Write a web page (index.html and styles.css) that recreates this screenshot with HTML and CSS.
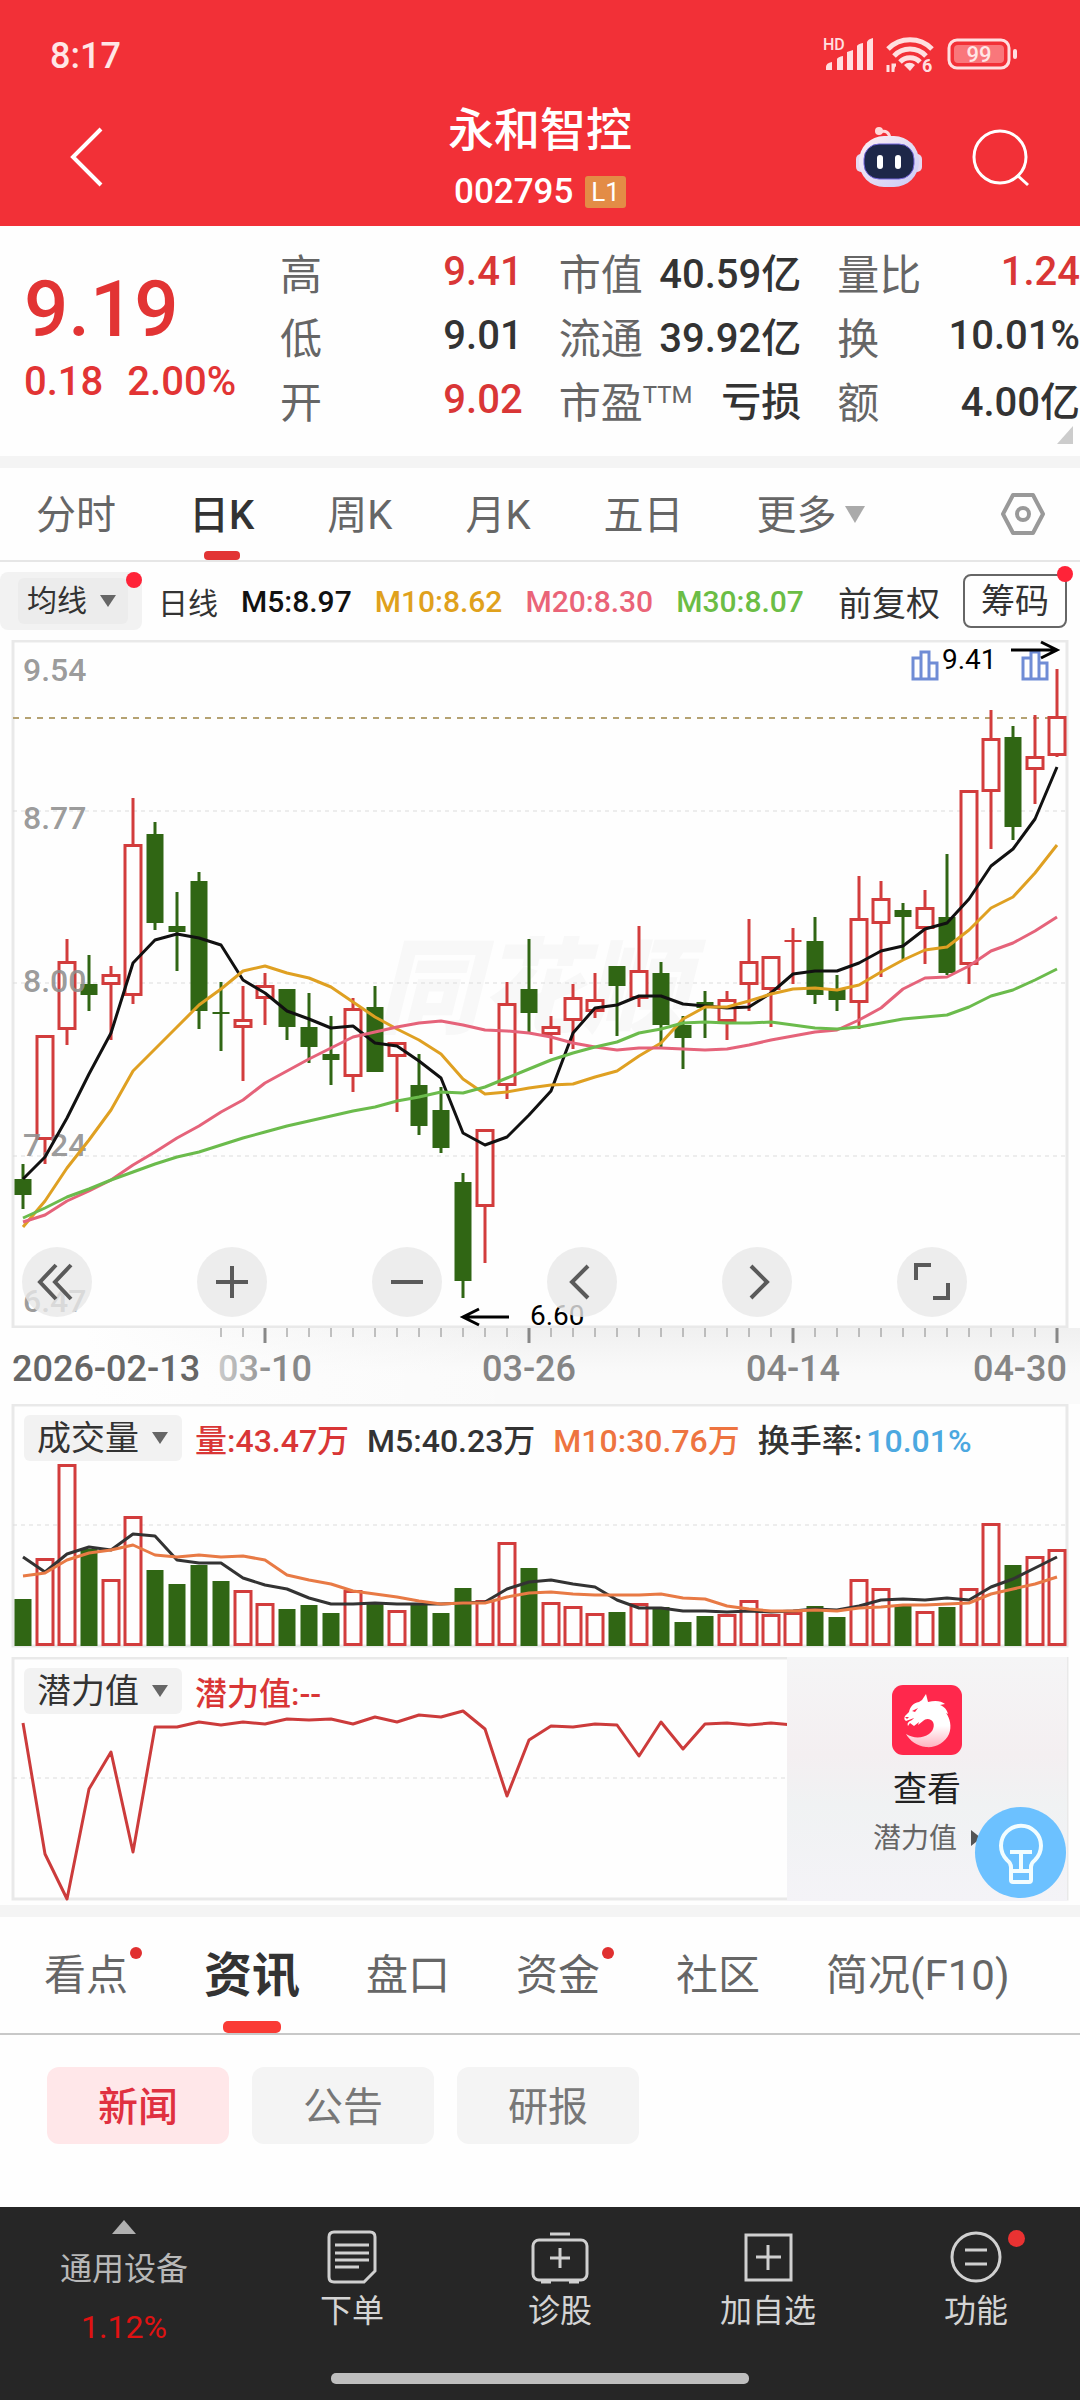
FILE: index.html
```html
<!DOCTYPE html>
<html lang="zh-CN">
<head>
    <meta charset="utf-8" />
    <meta name="viewport" content="width=device-width, initial-scale=1" />
    <title>永和智控 002795</title>
    <link rel="stylesheet" href="styles.css">
</head>
<body>
    <header class="header">
        <div class="status-bar">
            <span class="time">8:17</span>
            <svg class="status-icons" width="196" height="40" viewBox="0 0 196 40">
                <g fill="#ffdfe0">
                    <text class="svg-text" x="0" y="14" font-size="16" font-weight="500">HD</text>
                    <path d="M3 34v-3q0-4 6-5v8zM14 34V23q1-2 6-3v14zM24 34V16l6-2v20zM34 34V10q1-2 6-3v27zM44 34V6q1-3 6-4v32z" />
                    <path d="M81 29a8 8 0 0 1 11 0l-5 6z" />
                    <path d="M65 29v7M70 36v-7h3" stroke="#ffdfe0" stroke-width="3" />
                    <text class="svg-text" x="99" y="36" font-size="18" font-weight="700">6</text>
                </g>
                <g fill="none" stroke="#ffdfe0" stroke-width="5">
                    <path d="M65 13a31 31 0 0 1 44 0M71 20a22 22 0 0 1 32 0M77 26a14 14 0 0 1 20 0" />
                </g>
                <rect x="126" y="4" width="60" height="28" rx="8" fill="none" stroke="#ffdfe0" stroke-width="3" />
                <rect x="131" y="9" width="50" height="18" rx="4" fill="#f9777b" />
                <text class="svg-text" x="156" y="26" font-size="22" font-weight="500" text-anchor="middle" fill="#ffe6e6">99</text>
                <rect x="190" y="13" width="4" height="10" rx="2" fill="#ffdfe0" />
            </svg>
        </div>
        <div class="title-bar">
            <button class="icon-btn" aria-label="返回">
                <svg width="40" height="64" viewBox="0 0 40 64"><path d="M35 4L7 32l28 28" fill="none" stroke="#fff" stroke-width="4" /></svg>
            </button>
            <div class="title">
                <h1>永和智控</h1>
                <div class="code">002795 <span class="level">L1</span></div>
            </div>
            <div class="title-actions">
                <button class="icon-btn" aria-label="智能助手">
                    <svg width="68" height="64" viewBox="0 0 68 64">
                        <defs>
                            <linearGradient id="shell" x1="0" y1="0" x2="1" y2="1">
                                <stop offset="0" stop-color="#fff0f2" />
                                <stop offset="1" stop-color="#c9cbf6" />
                            </linearGradient>
                        </defs>
                        <path d="M25 7q9-3 10 7" fill="none" stroke="#ffd9da" stroke-width="3" />
                        <circle cx="24" cy="6" r="4" fill="#ffd9da" />
                        <rect x="1" y="29" width="10" height="18" rx="5" fill="#e6d8f0" />
                        <rect x="57" y="29" width="10" height="18" rx="5" fill="#e6d8f0" />
                        <rect x="4" y="11" width="60" height="51" rx="25" fill="url(#shell)" />
                        <rect x="9" y="19" width="50" height="35" rx="15" fill="#1d2748" stroke="#7566dc" stroke-width="1" />
                        <rect x="22" y="30" width="6" height="14" rx="3" fill="#fff" />
                        <rect x="40" y="30" width="6" height="14" rx="3" fill="#fff" />
                    </svg>
                </button>
                <button class="icon-btn" aria-label="搜索">
                    <svg width="60" height="60" viewBox="0 0 60 60"><g fill="none" stroke="#fff" stroke-width="3"><circle cx="30" cy="30" r="26" /><path d="M47 48l11 10" /></g></svg>
                </button>
            </div>
        </div>
    </header>

    <main>
        <section class="quote">
            <div class="price">
                <div class="last">9.19</div>
                <div class="change"><span>0.18</span><span>2.00%</span></div>
            </div>
            <dl class="stats">
                <div><dt>高</dt><dd class="up">9.41</dd></div>
                <div><dt>市值</dt><dd>40.59亿</dd></div>
                <div><dt>量比</dt><dd class="up">1.24</dd></div>
                <div><dt>低</dt><dd>9.01</dd></div>
                <div><dt>流通</dt><dd>39.92亿</dd></div>
                <div><dt>换</dt><dd>10.01%</dd></div>
                <div><dt>开</dt><dd class="up">9.02</dd></div>
                <div><dt>市盈<sup>TTM</sup></dt><dd>亏损</dd></div>
                <div><dt>额</dt><dd>4.00亿</dd></div>
            </dl>
            <span class="corner"></span>
        </section>

        <nav class="period-tabs">
            <button>分时</button>
            <button class="active">日K</button>
            <button>周K</button>
            <button>月K</button>
            <button>五日</button>
            <button>更多<i class="arrow"></i></button>
            <button class="settings" aria-label="设置">
                <svg width="46" height="44" viewBox="0 0 46 44"><g fill="none" stroke="#999" stroke-width="4" stroke-linejoin="round"><path d="M13 3h20l10 19-10 19H13L3 22z" /><circle cx="23" cy="22" r="6" /></g></svg>
            </button>
        </nav>

        <div class="ma-bar">
            <span class="ma-picker dot">
                <label class="picker"><select aria-label="主图指标"><option>均线</option></select></label>
            </span>
            <span class="period">日线</span>
            <span class="m5">M5:8.97</span>
            <span class="m10">M10:8.62</span>
            <span class="m20">M20:8.30</span>
            <span class="m30">M30:8.07</span>
            <button class="adjust">前复权</button>
            <button class="chips-btn dot">筹码</button>
        </div>

        <section class="chart">
            <svg id="kline" viewBox="0 0 1080 688">
                <rect class="frame" x="13" y="1" width="1054" height="686" />
                <text class="watermark" x="376" y="385">同花顺</text>
                <path class="grid" d="M13 171H1067M13 343H1067M13 516H1067" />
                <path class="last-line" d="M13 78H1067" />
                <g id="candles"></g>
                <g class="scale">
                    <text x="23" y="41">9.54</text>
                    <text x="23" y="189">8.77</text>
                    <text x="23" y="352">8.00</text>
                    <text x="23" y="516">7.24</text>
                    <text x="23" y="672">6.47</text>
                </g>
                <g id="averages"></g>
                <g fill="none" stroke="#6f8cd5" stroke-width="3">
                    <path d="M913 39V18h8V12h8v11h8v16zM921 39V18M929 39V23" />
                    <path d="M1023 39V18h8V12h8v11h8v16zM1031 39V18M1039 39V23" />
                </g>
                <g fill="none" stroke="#000" stroke-width="3">
                    <path d="M1011 10h45M1041 2l16 8-16 8" />
                    <path d="M509 677h-45M479 669l-16 8 16 8" />
                </g>
                <text class="mark" x="942" y="29">9.41</text>
                <text class="mark" x="530" y="685">6.60</text>
            </svg>
            <div class="chart-tools">
                <button aria-label="最左"><svg width="40" height="40" viewBox="0 0 40 40"><path d="M19 3L3 20l16 17M34 3L18 20l16 17" /></svg></button>
                <button aria-label="放大"><svg width="40" height="40" viewBox="0 0 40 40"><path d="M4 20h32M20 4v32" /></svg></button>
                <button aria-label="缩小"><svg width="40" height="40" viewBox="0 0 40 40"><path d="M4 20h32" /></svg></button>
                <button aria-label="左移"><svg width="40" height="40" viewBox="0 0 40 40"><path d="M26 4L10 20l16 16" /></svg></button>
                <button aria-label="右移"><svg width="40" height="40" viewBox="0 0 40 40"><path d="M14 4l16 16-16 16" /></svg></button>
                <button aria-label="全屏"><svg width="40" height="40" viewBox="0 0 40 40"><path d="M4 18V3h15M36 21v15H21" /></svg></button>
            </div>
        </section>

        <svg class="axis" id="axis" viewBox="0 0 1080 76">
            <defs>
                <linearGradient id="fade">
                    <stop offset="0" stop-color="#ccc" />
                    <stop offset="0.6" stop-color="#888" />
                </linearGradient>
            </defs>
            <g id="ticks"></g>
            <text x="12" y="53" fill="#666">2026-02-13</text>
            <text x="265" y="53" text-anchor="middle" fill="url(#fade)">03-10</text>
            <text x="529" y="53" text-anchor="middle">03-26</text>
            <text x="793" y="53" text-anchor="middle">04-14</text>
            <text x="1067" y="53" text-anchor="end">04-30</text>
        </svg>

        <section class="sub-chart">
            <svg id="volume" viewBox="0 0 1080 244">
                <rect class="frame" x="13" y="1" width="1054" height="241" />
                <path class="grid" d="M13 121H1067" />
            </svg>
            <div class="legend">
                <label class="picker"><select aria-label="副图指标一"><option>成交量</option></select></label>
                <span class="up">量:43.47万</span>
                <span>M5:40.23万</span>
                <span class="orange">M10:30.76万</span>
                <span>换手率:<b>10.01%</b></span>
            </div>
        </section>

        <section class="sub-chart">
            <svg id="potential" viewBox="0 0 1080 244">
                <rect class="frame" x="13" y="1" width="1054" height="241" />
                <path class="grid" d="M13 121H787" />
            </svg>
            <div class="legend">
                <label class="picker"><select aria-label="副图指标二"><option>潜力值</option></select></label>
                <span class="up">潜力值:--</span>
            </div>
            <a class="promo" href="#">
                <svg width="70" height="70" viewBox="0 0 70 70">
                    <defs>
                        <linearGradient id="dragon" x1="0" y1="0" x2="0" y2="1">
                            <stop offset="0.6" stop-color="#fff" />
                            <stop offset="1" stop-color="#ffb3c0" />
                        </linearGradient>
                    </defs>
                    <rect width="70" height="70" rx="11" fill="#ff284c" />
                    <path fill="url(#dragon)" d="M34 9L36 17C44 15 49 16 53 19L48 20C53 22 55 25 56 29L54 28C58 33 60 42 57 49C53 58 43 63 34 62C25 61 18 56 14 49C22 54 31 53 37 49C43 45 43 37 39 35C36 33 33 34 31 36L26 40L27 37L22 41L18 38L16 41C15 38 16 37 20 35L22 33L14 36C12 35 12 33 13 31L17 27C18 22 21 18 27 17L30 15z" />
                    <path fill="#ff284c" d="M20 26l6-3-3 4zM13 32l4 0-2 2z" />
                </svg>
                <strong>查看</strong>
                <span>潜力值<i></i></span>
            </a>
            <button class="bulb" aria-label="提示">
                <svg width="91" height="91" viewBox="0 0 91 91">
                    <g fill="none" stroke="#f2fdff" stroke-width="4" stroke-linejoin="round">
                        <path d="M36 64v-4q0-4-4-7a20 20 0 1 1 28 0q-4 3-4 7v4zM36 64v9q0 2 2 2h16q2 0 2-2v-9" />
                        <path d="M35 45h22M46 45v19" />
                    </g>
                </svg>
            </button>
        </section>

        <nav class="info-tabs">
            <button><span class="dot">看点</span></button>
            <button class="active">资讯</button>
            <button>盘口</button>
            <button><span class="dot">资金</span></button>
            <button>社区</button>
            <button>简况(F10)</button>
        </nav>

        <div class="filters">
            <button class="active">新闻</button>
            <button>公告</button>
            <button>研报</button>
        </div>
    </main>

    <footer class="bottom-bar">
        <button class="sector">
            <i></i>
            <span>通用设备</span>
            <em>1.12%</em>
        </button>
        <button>
            <svg width="60" height="56" viewBox="0 0 60 56"><path d="M12 3h36q5 0 5 5v34L42 53H12q-5 0-5-5V8q0-5 5-5z" /><path d="M13 16h34M13 24h34M13 31h34M13 38h24" /></svg>
            <span>下单</span>
        </button>
        <button>
            <svg width="60" height="56" viewBox="0 0 60 56"><rect x="3" y="11" width="54" height="40" rx="6" /><path d="M20 5h20M20 29h20M30 19v20M11 53h10M39 53h10" /></svg>
            <span>诊股</span>
        </button>
        <button>
            <svg width="60" height="56" viewBox="0 0 60 56"><rect x="8" y="6" width="45" height="45" /><path d="M18 28h25M30 16v25" /></svg>
            <span>加自选</span>
        </button>
        <button>
            <svg width="60" height="56" viewBox="0 0 60 56"><circle cx="30" cy="28" r="24" /><path d="M19 21h22M19 35h22" /></svg>
            <i class="badge"></i>
            <span>功能</span>
        </button>
        <div class="home-bar"></div>
    </footer>

    <script src="chart.js"></script>
</body>
</html>
```

FILE: styles.css
```css
* {
    box-sizing: border-box;
}

body {
    margin: 0;
    min-height: 100vh;
    display: flex;
    flex-direction: column;
    font-family: Roboto, "Noto Sans CJK SC", sans-serif;
    color: #333;
    background-color: #fefefe;
}

main {
    flex: 1;
}

button, select {
    font: inherit;
    color: inherit;
    background: none;
    border: none;
    padding: 0;
    margin: 0;
    cursor: pointer;
}

svg {
    display: block;
}

.up {
    color: #d93636;
}

/* header */
.header {
    background-color: #f23037;
    color: #fff;
    height: 226px;
}

.status-bar {
    display: flex;
    justify-content: space-between;
    align-items: center;
    height: 76px;
    padding: 36px 61px 0 50px;
}

.time {
    font-size: 36px;
    font-weight: 500;
    color: #ffe6e6;
}

.svg-text {
    font-family: Roboto, sans-serif;
}

.title-bar {
    display: grid;
    grid-template-columns: 1fr auto 1fr;
    align-items: center;
    height: 150px;
    padding: 12px 50px 0 66px;
}

.title {
    display: flex;
    flex-direction: column;
    align-items: center;
    gap: 14px;
    margin: -4px 16px 0 0;
}

.title h1 {
    margin: 0;
    font-size: 46px;
    line-height: 60px;
    font-weight: 500;
}

.code {
    display: flex;
    align-items: center;
    gap: 12px;
    font-size: 35px;
    line-height: 36px;
    font-weight: 500;
}

.level {
    padding: 0 6px;
    border-radius: 3px;
    background-color: #e38c46;
    font-size: 26px;
    line-height: 32px;
    font-weight: 400;
}

.title-actions {
    display: flex;
    justify-content: flex-end;
    align-items: center;
    gap: 47px;
}

/* quote */
.quote {
    position: relative;
    display: flex;
    height: 242px;
    border-bottom: 12px solid #f4f4f4;
}

.price {
    flex: none;
    width: 280px;
    padding: 40px 0 0 24px;
    color: #e23434;
    font-weight: 500;
}

.last {
    font-size: 78px;
    line-height: 88px;
    font-weight: 500;
}

.change {
    display: flex;
    gap: 24px;
    font-size: 40px;
    line-height: 56px;
}

.stats {
    flex: 1;
    display: grid;
    grid-template-columns: repeat(3, 1fr);
    column-gap: 36px;
    grid-auto-rows: 64px;
    margin: 0;
    padding-top: 13px;
}

.stats div {
    display: flex;
    justify-content: space-between;
    align-items: center;
    white-space: nowrap;
}

dt {
    font-size: 42px;
    color: #666;
}

dt sup {
    font-size: 24px;
    line-height: 24px;
}

dd {
    margin: 0;
    font-size: 40px;
    font-weight: 500;
}

.corner {
    position: absolute;
    right: 7px;
    bottom: 12px;
    border-left: 16px solid transparent;
    border-bottom: 18px solid #ccc;
}

/* period tabs */
.period-tabs {
    display: flex;
    gap: 73px;
    height: 94px;
    padding: 0 34px 0 36px;
    border-bottom: 2px solid #e6e6e6;
    font-size: 40px;
    color: #666;
}

.period-tabs button,
.info-tabs button {
    position: relative;
    padding-bottom: 4px;
    white-space: nowrap;
}

.period-tabs .active {
    color: #333;
    font-weight: 500;
}

.period-tabs .active::after {
    content: "";
    position: absolute;
    left: 50%;
    bottom: 0;
    width: 36px;
    height: 9px;
    margin-left: -18px;
    border-radius: 4px;
    background-color: #e23434;
}

.period-tabs .settings {
    margin-left: auto;
    padding-bottom: 0;
}

.arrow {
    display: inline-block;
    margin-left: 8px;
    vertical-align: 6px;
    border: 10px solid transparent;
    border-top: 17px solid #aaa;
    border-bottom: none;
}

/* moving averages */
.ma-bar {
    display: flex;
    align-items: center;
    gap: 23px;
    height: 78px;
    padding-right: 13px;
    font-size: 30px;
    font-weight: 500;
    white-space: nowrap;
}

.ma-bar .period,
.ma-bar button {
    font-weight: 400;
}

.dot {
    position: relative;
}

.dot::after {
    content: "";
    position: absolute;
    top: -8px;
    right: -8px;
    width: 16px;
    height: 16px;
    border-radius: 50%;
    background-color: #ff2338;
}

.ma-picker {
    width: 142px;
    padding: 6px 14px 6px 18px;
    margin-right: -7px;
    border-radius: 8px;
    background-color: #f2f2f2;
}

.ma-picker::after {
    top: 0;
    right: 0;
}

.ma-picker .picker {
    width: 110px;
    padding: 0 12px 0 9px;
    background-color: #ececec;
    font-size: 30px;
    font-weight: 400;
}

.picker {
    display: flex;
    align-items: center;
    justify-content: space-between;
    height: 46px;
    width: 158px;
    padding: 0 14px 0 13px;
    border-radius: 6px;
    background-color: #f2f2f2;
    font-size: 34px;
}

.picker select {
    appearance: none;
    line-height: 46px;
}

.picker::after {
    content: "";
    border: 8px solid transparent;
    border-top: 12px solid #666;
    border-bottom: none;
}

.m5 { color: #111; }
.m10 { color: #e0a11c; }
.m20 { color: #ea6478; }
.m30 { color: #6bbd45; }

.ma-bar .adjust {
    margin-left: auto;
    font-size: 34px;
}

.ma-bar .chips-btn {
    height: 54px;
    padding: 0 16px;
    border: 2px solid #666;
    border-radius: 8px;
    font-size: 34px;
    line-height: 46px;
}

.chips-btn::after {
    top: -10px;
}

/* charts */
.chart, .sub-chart {
    position: relative;
}

.chart > svg, .sub-chart > svg, .axis {
    width: 100%;
    height: auto;
}

.frame {
    fill: none;
    stroke: #e9e9e9;
    stroke-width: 3;
}

.grid {
    stroke: #dcdcdc;
    stroke-width: 1;
    stroke-dasharray: 4 4;
}

.last-line {
    stroke: #b5a272;
    stroke-width: 2;
    stroke-dasharray: 6 6;
}

.watermark {
    font-size: 104px;
    font-weight: 900;
    font-style: italic;
    fill: #f8f8f8;
}

.scale text {
    font-size: 32px;
    font-weight: 500;
    fill: #8f8f8f;
    fill-opacity: .9;
}

.mark {
    font-size: 28px;
    fill: #000;
}

.line {
    fill: none;
    stroke-width: 3;
    stroke-linejoin: round;
}

.red-body {
    fill: #fefefe;
    stroke: #d23c3c;
    stroke-width: 3;
}

.red-wick { stroke: #d23c3c; stroke-width: 3; }
.green-body { fill: #306614; }
.green-wick { stroke: #306614; stroke-width: 3; }

.chart-tools {
    position: absolute;
    left: 22px;
    right: 113px;
    bottom: 11px;
    display: flex;
    justify-content: space-between;
}

.chart-tools button {
    display: grid;
    place-items: center;
    width: 70px;
    height: 70px;
    border-radius: 50%;
    background-color: rgba(232, 232, 232, .8);
}

.chart-tools path {
    fill: none;
    stroke: #5a5a5a;
    stroke-width: 4;
}

.axis {
    background: linear-gradient(90deg, #fefefe 8%, rgba(254, 254, 254, 0) 50%), linear-gradient(#f0f0f0, #fafafa 60%);
}

.axis text {
    font-size: 36px;
    font-weight: 500;
    fill: #858585;
}

.axis text[fill^="#"] { fill: #666; }
.axis text[fill^="url"] { fill: url(#fade); }

.axis path {
    stroke: #888;
}

.sub-chart {
    margin-bottom: 9px;
}

.legend {
    position: absolute;
    top: 11px;
    left: 24px;
    display: flex;
    align-items: center;
    font-size: 32px;
    font-weight: 500;
    gap: 18px;
    white-space: nowrap;
}

.legend .picker {
    margin-right: -5px;
    font-weight: 400;
}

.legend b {
    margin-left: 4px;
    font-weight: 500;
    color: #4ba8e0;
}

.orange {
    color: #ee7440;
}

.promo {
    position: absolute;
    top: 0;
    right: 13px;
    bottom: 0;
    width: 280px;
    padding-top: 28px;
    display: flex;
    flex-direction: column;
    align-items: center;
    background: linear-gradient(#f5f5f6, #f4eff1 40%, #f0f2f3 60%, #f4f3f7);
    color: #666;
    font-size: 28px;
    line-height: 40px;
    text-decoration: none;
}

.promo strong {
    margin: 8px 0 4px;
    font-size: 34px;
    line-height: 52px;
    font-weight: 400;
    color: #222;
}

.promo i {
    display: inline-block;
    margin-left: 14px;
    vertical-align: 2px;
    border: 8px solid transparent;
    border-left: 10px solid #555;
    border-right: none;
}

.bulb {
    position: absolute;
    right: 14px;
    bottom: 3px;
    width: 91px;
    height: 91px;
    border-radius: 50%;
    background-color: #6cc1ff;
}

/* info tabs */
.info-tabs {
    display: flex;
    gap: 66px;
    height: 130px;
    margin-top: -5px;
    padding-left: 44px;
    border-top: 12px solid #f4f4f4;
    border-bottom: 2px solid #c8c8c8;
    font-size: 42px;
    color: #666;
}

.info-tabs button {
    padding-bottom: 8px;
}

.info-tabs .active {
    color: #333;
    font-size: 48px;
    font-weight: 700;
}

.info-tabs .active::after {
    content: "";
    position: absolute;
    left: 50%;
    bottom: 0;
    width: 58px;
    height: 12px;
    margin-left: -29px;
    border-radius: 5px;
    background-color: #fa3b35;
}

.info-tabs .dot {
    margin-right: 10px;
}

.info-tabs .dot::after {
    top: -4px;
    right: -14px;
    width: 12px;
    height: 12px;
    background-color: #e03030;
}

.filters {
    display: flex;
    gap: 23px;
    padding: 32px 47px;
}

.filters button {
    width: 182px;
    height: 77px;
    padding-bottom: 4px;
    border-radius: 12px;
    background-color: #f4f4f4;
    font-size: 40px;
    color: #777;
}

.filters .active {
    background-color: #ffe7e9;
    color: #e03040;
    font-weight: 500;
}

/* bottom bar */
.bottom-bar {
    position: relative;
    display: grid;
    grid-template-columns: 248fr repeat(4, 208fr);
    height: 193px;
    background-color: #262626;
    color: #d4d4d4;
    font-size: 32px;
}

.bottom-bar button {
    position: relative;
    display: flex;
    flex-direction: column;
    align-items: center;
    gap: 3px;
    padding-top: 22px;
    line-height: 46px;
}

.bottom-bar svg {
    fill: none;
    stroke: #d0d0d0;
    stroke-width: 3;
}

.bottom-bar .sector {
    gap: 12px;
    padding-top: 13px;
    color: #b8b8b8;
}

.sector i {
    border: 12px solid transparent;
    border-bottom: 14px solid #b0b0b0;
    border-top: none;
}

.sector em {
    font-style: normal;
    color: #e01212;
}

.badge {
    position: absolute;
    top: 23px;
    left: 50%;
    width: 17px;
    height: 17px;
    margin-left: 32px;
    border-radius: 50%;
    background-color: #ea3232;
}

.home-bar {
    position: absolute;
    left: 50%;
    bottom: 16px;
    width: 418px;
    height: 11px;
    margin-left: -209px;
    border-radius: 5px;
    background-color: #bebebe;
}
```

FILE: chart.js
```js
const step = 22;
const firstX = 23;

// [direction, high, body top, body bottom, low]
const candles = [
    [0, 524, 539, 555, 569], [1, 395, 395, 500, 524], [1, 299, 321, 390, 405], [0, 315, 344, 355, 371],
    [1, 326, 334, 345, 400], [1, 158, 204, 356, 364], [0, 182, 194, 283, 290], [0, 252, 286, 292, 331],
    [0, 232, 241, 371, 389], [0, 342, 372, 374, 411], [1, 346, 379, 388, 441], [1, 333, 345, 359, 385],
    [0, 349, 349, 387, 400], [0, 353, 387, 407, 423], [0, 376, 414, 420, 445], [1, 358, 368, 437, 452],
    [0, 346, 367, 432, 432], [1, 402, 402, 417, 472], [0, 414, 445, 486, 495], [0, 447, 470, 508, 513],
    [0, 533, 542, 641, 658], [1, 489, 489, 567, 623], [1, 342, 363, 446, 459], [0, 299, 349, 373, 392],
    [1, 376, 386, 395, 414], [1, 344, 357, 381, 409], [1, 333, 359, 372, 378], [0, 326, 326, 346, 396],
    [1, 286, 330, 359, 367], [0, 322, 333, 385, 408], [0, 376, 385, 398, 429], [0, 351, 362, 368, 398],
    [1, 351, 359, 382, 400], [1, 279, 321, 345, 371], [1, 316, 316, 350, 387], [1, 288, 300, 302, 344],
    [0, 277, 301, 355, 364], [0, 335, 349, 360, 371], [1, 236, 278, 363, 389], [1, 241, 258, 284, 337],
    [0, 263, 270, 277, 319], [1, 250, 267, 289, 324], [0, 214, 277, 333, 335], [1, 150, 150, 325, 344],
    [1, 70, 98, 152, 209], [0, 86, 97, 187, 200], [1, 75, 116, 130, 164], [1, 29, 76, 116, 117]
];

const ma5 = [539, 517, 478, 434, 393, 323, 300, 294, 298, 305, 340, 353, 371, 379, 388, 386, 403, 406, 421, 438, 493, 505, 497, 475, 451, 393, 368, 365, 356, 356, 364, 366, 368, 367, 353, 334, 331, 331, 323, 311, 306, 289, 283, 259, 226, 209, 179, 127];
const ma10 = [587, 561, 528, 500, 470, 431, 409, 387, 365, 349, 331, 326, 333, 338, 347, 362, 377, 389, 400, 414, 439, 454, 452, 448, 445, 444, 437, 431, 416, 403, 379, 367, 367, 361, 354, 349, 348, 350, 345, 332, 320, 310, 307, 290, 268, 257, 233, 205];
const ma20 = [582, 575, 561, 551, 540, 525, 512, 498, 486, 472, 460, 443, 431, 419, 408, 397, 392, 387, 383, 381, 385, 390, 391, 393, 397, 403, 407, 410, 408, 408, 409, 410, 409, 405, 400, 396, 392, 390, 380, 368, 349, 338, 337, 326, 311, 303, 291, 277];
const ma30 = [578, 568, 557, 549, 540, 532, 524, 517, 512, 505, 498, 492, 486, 481, 476, 471, 467, 461, 457, 452, 453, 447, 438, 429, 420, 413, 407, 402, 393, 389, 383, 382, 383, 383, 382, 385, 388, 389, 387, 383, 379, 377, 375, 367, 356, 350, 340, 329];

const volumes = [195, 154, 60, 145, 175, 112, 166, 180, 161, 177, 186, 199, 205, 201, 209, 186, 199, 206, 200, 209, 184, 196, 138, 164, 198, 202, 209, 208, 199, 203, 218, 212, 210, 196, 210, 208, 202, 213, 175, 184, 201, 207, 203, 184, 119, 161, 152, 145];
const vol5 = [153, 168, 150, 143, 146, 130, 132, 156, 159, 159, 174, 181, 185, 194, 200, 200, 199, 200, 200, 200, 199, 198, 185, 178, 176, 180, 183, 196, 204, 204, 207, 207, 208, 207, 208, 207, 205, 206, 202, 196, 195, 196, 194, 196, 183, 175, 164, 153];
const vol10 = [172, 169, 156, 149, 146, 141, 151, 153, 151, 153, 152, 156, 171, 176, 180, 187, 190, 193, 197, 200, 199, 199, 193, 189, 188, 190, 191, 191, 191, 190, 194, 195, 202, 205, 207, 207, 206, 207, 204, 203, 201, 201, 200, 199, 190, 185, 180, 173];
const potential = [66, 197, 242, 132, 95, 195, 70, 70, 65, 68, 65, 67, 62, 63, 62, 67, 60, 65, 58, 60, 54, 72, 139, 83, 69, 70, 67, 68, 99, 65, 92, 67, 66, 68, 66, 68];

const xAt = i => firstX + i * step;

function line(values, color) {
    const points = values.map((y, i) => `${xAt(i)},${y}`).join(' ');
    return `<polyline class="line" stroke="${color}" points="${points}" />`;
}

function body(up, x, top, bottom) {
    if (up && bottom - top > 3) {
        return `<rect class="red-body" x="${x - 8}" y="${top + 1.5}" width="16" height="${bottom - top - 3}" />`;
    }
    const fill = up ? 'fill="#d23c3c"' : 'class="green-body"';
    return `<rect ${fill} x="${x - 8.5}" y="${top}" width="17" height="${bottom - top}" />`;
}

document.getElementById('candles').innerHTML = candles.map(([up, high, top, bottom, low], i) => {
    const x = xAt(i);
    return `<path class="${up ? 'red' : 'green'}-wick" d="M${x} ${high}V${low}" />` + body(up, x, top, bottom);
}).join('');

document.getElementById('averages').innerHTML =
    line(ma5, '#111') + line(ma10, '#dfa022') + line(ma20, '#e5637a') + line(ma30, '#6bbb4c');

document.getElementById('volume').innerHTML +=
    volumes.map((top, i) => body(candles[i][0], xAt(i), top, 242)).join('') +
    line(vol5, '#333') + line(vol10, '#e87a45');

document.getElementById('potential').innerHTML += line(potential, '#cc3b3b');

let ticks = '';
for (let i = 9; i < candles.length; i++) {
    const major = i % 12 === 11;
    ticks += `<path d="M${xAt(i)} 0v${major ? 15 : 9}" stroke-width="${major ? 3 : 1}" />`;
}
document.getElementById('ticks').innerHTML = ticks;
```
